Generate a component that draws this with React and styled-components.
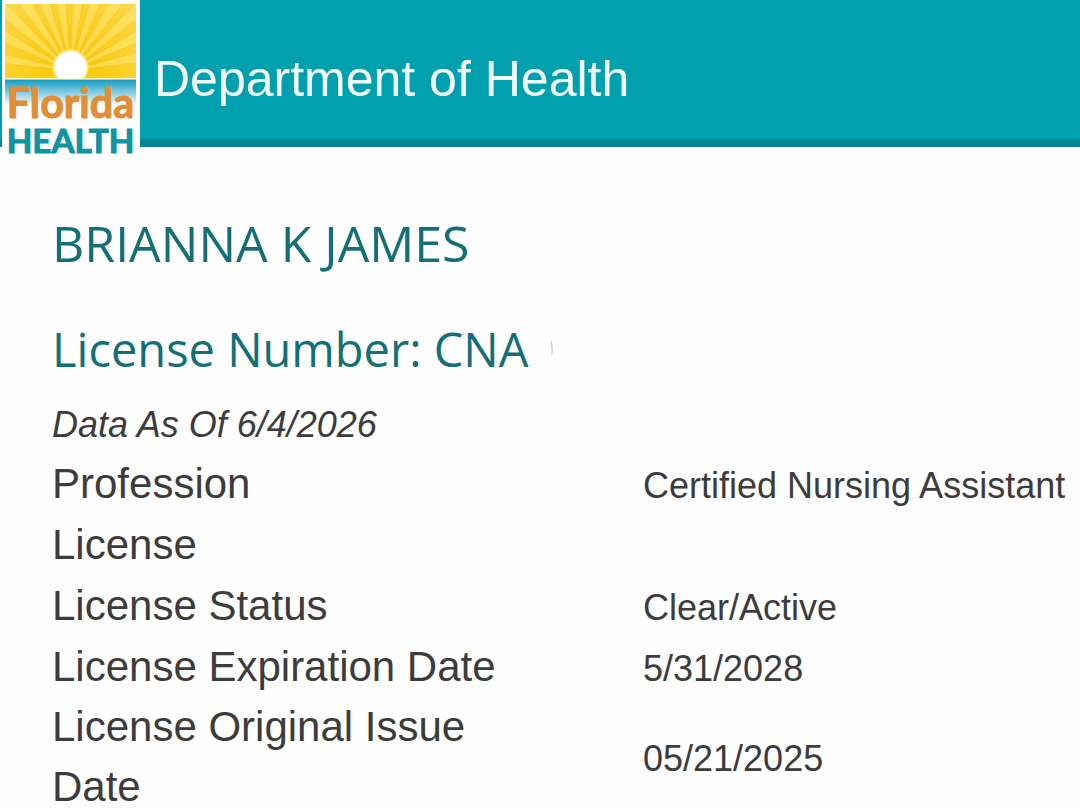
import React from 'react'
import styled, { createGlobalStyle } from 'styled-components';

const details = [
  { label: 'Profession', value: 'Certified Nursing Assistant' },
  { label: 'License', value: '' },
  { label: 'License Status', value: 'Clear/Active' },
  { label: 'License Expiration Date', value: '5/31/2028' },
  { label: 'License Original Issue Date', value: '05/21/2025' },
];

// angles of the sun rays, clockwise from the left horizon
const rays = [10, 27, 42, 56, 69, 82, 96, 110, 124, 138, 153, 169];

function rayPoints(angle) {
  const point = (deg) => {
    const rad = (deg * Math.PI) / 180;
    return `${65 - Math.cos(rad) * 120},${66 - Math.sin(rad) * 120}`;
  };
  return `65,66 ${point(angle - 4)} ${point(angle + 4)}`;
}

function Logo() {
  return <svg viewBox='0 0 130 151' role='img' aria-label='Florida Health'>
    <defs>
      <radialGradient id='sky' gradientUnits='userSpaceOnUse' cx='65' cy='64' r='92'>
        <stop offset='0' stopColor='#fbc503'/>
        <stop offset='0.5' stopColor='#fccf20'/>
        <stop offset='1' stopColor='#fbd84c'/>
      </radialGradient>
      <linearGradient id='sea' x1='0' y1='0' x2='0' y2='1'>
        <stop offset='0' stopColor='#159cc0'/>
        <stop offset='0.35' stopColor='#62bedb'/>
        <stop offset='1' stopColor='#fefefe'/>
      </linearGradient>
      <clipPath id='skyClip'>
        <rect width='130' height='74'/>
      </clipPath>
    </defs>
    <g clipPath='url(#skyClip)'>
      <rect width='130' height='74' fill='url(#sky)'/>
      {rays.map((angle) => (
        <polygon
          key={angle}
          points={rayPoints(angle)}
          fill='#ffea78'
          fillOpacity='0.55'
          stroke='#dcae30'
          strokeWidth='0.4'
          strokeOpacity='0.5'
        />
      ))}
      <circle cx='65' cy='63' r='18' fill='#ffef9a' fillOpacity='0.7'/>
      <circle cx='65' cy='63' r='16' fill='#ffffff'/>
    </g>
    <rect y='75' width='130' height='26' fill='url(#sea)'/>
    <LogoText x='65' y='113' fontSize='41' fill='#e18e34' stroke='#e18e34'>Florida</LogoText>
    <LogoText x='65' y='148' fontSize='33' fill='#12939f' stroke='#12939f'>HEALTH</LogoText>
  </svg>
}

export default function App() {
  return <>
    <GlobalStyle/>
    <Header>
      <Brand href='#home'>
        <Logo/>
      </Brand>
      <Title>Department of Health</Title>
    </Header>
    <Main>
      <Name>BRIANNA K JAMES</Name>
      <LicenseNumber>
        License Number: CNA
        <Mark viewBox='0 0 4 16' aria-hidden='true'>
          <path d='M1 0 L2 5 V14' fill='none' stroke='#a8acac' strokeWidth='0.8'/>
        </Mark>
      </LicenseNumber>
      <AsOf>Data As Of 6/4/2026</AsOf>
      <Details>
        <tbody>
          {details.map(({ label, value }) => (
            <tr key={label}>
              <Label scope='row'>{label}</Label>
              <Value>{value}</Value>
            </tr>
          ))}
        </tbody>
      </Details>
    </Main>
  </>
}

const GlobalStyle = createGlobalStyle`
  * {
    box-sizing: border-box;
  }
  body {
    margin: 0;
    background: #fefefe;
    color: #3c3c3c;
    font-family: "Liberation Sans", Arial, sans-serif;
    overflow-x: hidden;
  }
`;

const Header = styled.header`
  display: flex;
  align-items: flex-start;
  height: 147px;
  padding-left: 2px;
  background: #00a0af;
  border-bottom: 8px solid #058694;
`;

const Brand = styled.a`
  flex: none;
  width: 138px;
  padding: 4px 4px 0 3px;
  background: #fefefe;
  svg {
    display: block;
    width: 100%;
    overflow: visible;
  }
`;

const LogoText = styled.text`
  font-family: Lato, sans-serif;
  font-weight: 700;
  stroke-width: 1;
  text-anchor: middle;
`;

const Title = styled.h1`
  margin: 0;
  padding: 49px 0 0 14px;
  color: #f4ffff;
  font-size: 50px;
  font-weight: 400;
  line-height: 60px;
`;

const Main = styled.main`
  padding: 62px 0 0 52px;
`;

const Name = styled.h2`
  margin: 0 0 38px;
  color: #146f77;
  font-family: "Open Sans", "Noto Sans", sans-serif;
  font-size: 50px;
  font-weight: 400;
  line-height: 68px;
`;

const LicenseNumber = styled(Name)`
  display: flex;
  align-items: center;
  gap: 22px;
  margin-bottom: 16px;
  font-size: 47px;
`;

const Mark = styled.svg`
  width: 4px;
  height: 16px;
`;

const AsOf = styled.p`
  margin: 0 0 2px;
  font-size: 36px;
  font-style: italic;
  line-height: 52px;
`;

const Details = styled.table`
  width: 100%;
  border-collapse: collapse;
  table-layout: fixed;
`;

const Label = styled.th`
  width: 591px;
  height: 60px;
  padding: 0 120px 0 0;
  font-size: 42px;
  font-weight: 400;
  line-height: 60px;
  text-align: left;
`;

const Value = styled.td`
  height: 61px;
  padding: 4px 0 0;
  font-size: 36px;
  line-height: 48px;
  white-space: nowrap;
`;
